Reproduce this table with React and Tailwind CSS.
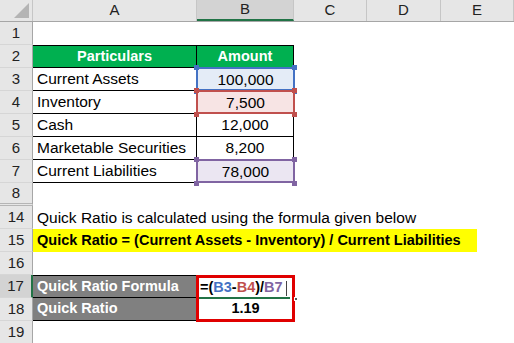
const cols = ['A', 'B', 'C', 'D', 'E']
const colW = ['w-[164px]', 'w-[97px]', 'w-[73px]', 'w-[74px]', 'w-[73px]']

function Handle({ className, color }) {
  return <span className={`absolute w-[5px] h-[5px] ${color} ${className}`}></span>
}

function RangeBox({ border, fill, handle, children }) {
  return (
    <div className={`relative w-[97px] h-full ${fill} flex items-center justify-center`}>
      <div className={`absolute -left-[1px] -top-[1px] -right-[1px] bottom-0 border-2 ${border}`}></div>
      <Handle color={handle} className="-left-[3px] -top-[3px]" />
      <Handle color={handle} className="-right-[3px] -top-[3px]" />
      <Handle color={handle} className="-left-[3px] -bottom-[3px]" />
      <Handle color={handle} className="-right-[3px] -bottom-[3px]" />
      <span className="relative">{children}</span>
    </div>
  )
}

function RowHead({ n, active, double }) {
  return (
    <div
      className={`w-[33px] shrink-0 h-full flex items-center justify-center text-[15px] text-[#222] border-b ${
        double ? 'border-b-[3px] border-double border-b-[#b5b5b5]' : 'border-b-[#d6d6d6]'
      } ${active ? 'bg-[#d3d3d3] border-r-2 border-r-[#217346]' : 'bg-[#e6e6e6] border-r border-r-[#a6a6a6]'}`}
    >
      {n}
    </div>
  )
}

function Row({ n, children, active, double }) {
  return (
    <div className="flex h-[23px]">
      <RowHead n={n} active={active} double={double} />
      {children}
    </div>
  )
}

export default function App() {
  const data = [
    { n: 3, label: 'Current Assets', value: '100,000', box: 'blue' },
    { n: 4, label: 'Inventory', value: '7,500', box: 'red' },
    { n: 5, label: 'Cash', value: '12,000' },
    { n: 6, label: 'Marketable Securities', value: '8,200' },
    { n: 7, label: 'Current Liabilities', value: '78,000', box: 'purple' },
  ]
  const boxes = {
    blue: { border: 'border-[#4472c4]', fill: 'bg-[#e4ecf7]', handle: 'bg-[#4472c4]' },
    red: { border: 'border-[#c0504d]', fill: 'bg-[#f7e4e4]', handle: 'bg-[#c0504d]' },
    purple: { border: 'border-[#8064a2]', fill: 'bg-[#ebe6f2]', handle: 'bg-[#8064a2]' },
  }

  return (
    <div className="w-[514px] h-[343px] overflow-hidden bg-white text-[15.5px] text-black font-['Liberation_Sans',Arial,sans-serif]">
      {/* column headers */}
      <div className="flex h-[22px] bg-[#e6e6e6] border-b border-[#a6a6a6] text-[15px]">
        <div className="w-[33px] shrink-0 relative border-r border-[#c6c6c6]">
          <div className="absolute right-[3px] bottom-[3px] w-0 h-0 border-l-[15px] border-l-transparent border-b-[15px] border-b-[#b4b4b4]"></div>
        </div>
        {cols.map((c, i) => (
          <div
            key={c}
            className={`${colW[i]} shrink-0 flex items-center justify-center text-[#222] border-r border-[#c6c6c6] ${
              c === 'B' ? 'bg-[#d3d3d3] border-b-2 border-b-[#217346]' : ''
            }`}
          >
            {c}
          </div>
        ))}
      </div>

      <Row n={1} />
      <Row n={2}>
        <div className="w-[164px] bg-[#00b050] text-white text-[14.5px] font-bold flex items-center justify-center border-t border-b border-r border-black">
          Particulars
        </div>
        <div className="w-[97px] bg-[#00b050] text-white text-[14.5px] font-bold flex items-center justify-center border-t border-b border-r border-black">
          Amount
        </div>
      </Row>
      {data.map((d) => (
        <Row key={d.n} n={d.n}>
          <div className="w-[164px] pl-[4px] flex items-center border-b border-r border-black">{d.label}</div>
          {d.box ? (
            <RangeBox {...boxes[d.box]}>{d.value}</RangeBox>
          ) : (
            <div className="w-[97px] flex items-center justify-center border-b border-r border-black">{d.value}</div>
          )}
        </Row>
      ))}
      <Row n={8} double />
      <Row n={14}>
        <div className="pl-[4px] flex items-center whitespace-nowrap">
          Quick Ratio is calculated using the formula given below
        </div>
      </Row>
      <Row n={15}>
        <div className="w-[444px] bg-[#ffff00] pl-[4px] text-[14.5px] font-bold flex items-center whitespace-nowrap">
          Quick Ratio = (Current Assets - Inventory) / Current Liabilities
        </div>
      </Row>
      <Row n={16} />
      <Row n={17} active>
        <div className="w-[164px] bg-[#808080] text-white text-[14.5px] font-bold pl-[4px] flex items-center border-t border-b border-black">
          Quick Ratio Formula
        </div>
        <div className="relative w-[99px] -ml-[1px] border-t-[3px] border-x-[3px] border-[#e00000] text-[14.5px] font-bold flex items-center">
          <span className="pl-[1px]">
            =(<span className="text-[#4472c4]">B3</span>-<span className="text-[#c0504d]">B4</span>)/
            <span className="text-[#8064a2]">B7</span>
          </span>
          <span className="ml-[3px] w-px h-[15px] bg-[#444]"></span>
          <div className="absolute left-0 right-[2px] -bottom-[1px] h-[2px] bg-[#217346]"></div>
          <span className="absolute -right-[6px] -bottom-[3px] w-[4px] h-[4px] bg-[#555] border border-white"></span>
        </div>
      </Row>
      <Row n={18}>
        <div className="w-[164px] bg-[#808080] text-white text-[14.5px] font-bold pl-[4px] flex items-center border-b border-black">
          Quick Ratio
        </div>
        <div className="w-[99px] -ml-[1px] h-[24px] border-b-[3px] border-x-[3px] border-[#e00000] text-[14.5px] font-bold flex items-center justify-center">
          1.19
        </div>
      </Row>
      <Row n={19} />
    </div>
  )
}
